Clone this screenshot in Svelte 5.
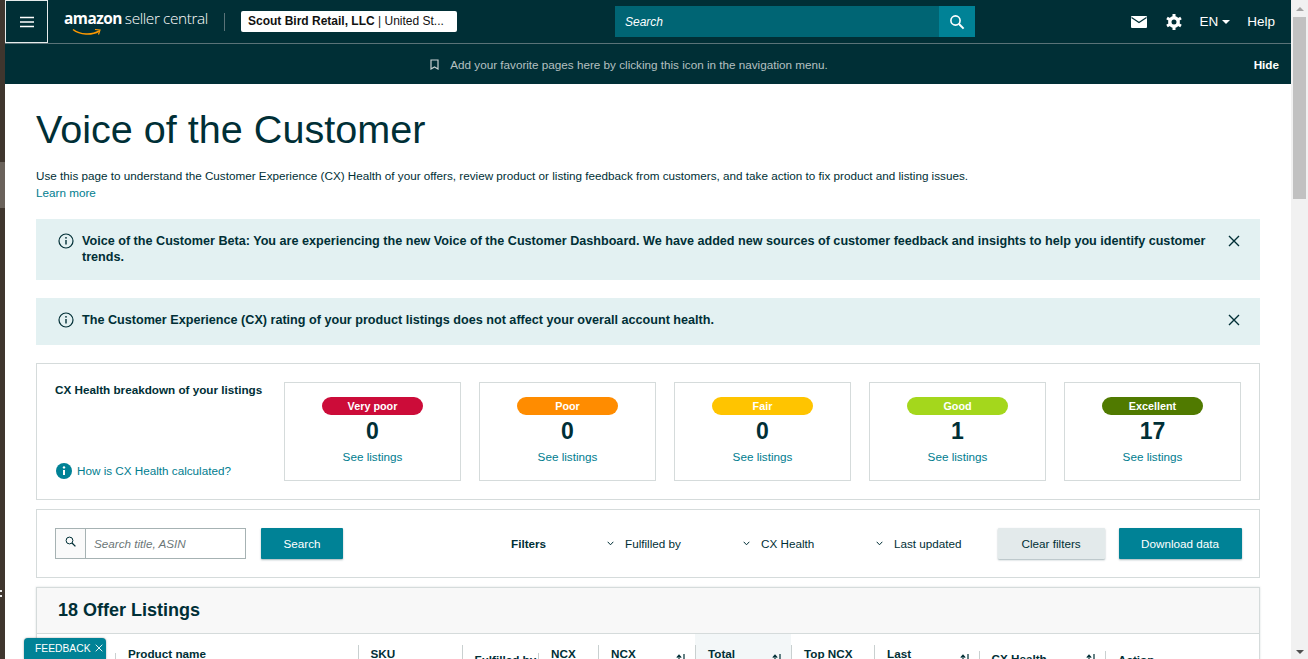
<script>
  const health = [
    { label: "Very poor", count: 0, cls: "vp" },
    { label: "Poor", count: 0, cls: "po" },
    { label: "Fair", count: 0, cls: "fa" },
    { label: "Good", count: 1, cls: "go" },
    { label: "Excellent", count: 17, cls: "ex" },
  ];
  const filters = [
    { label: "Fulfilled by", cls: "f1" },
    { label: "CX Health", cls: "f2" },
    { label: "Last updated", cls: "f3" },
  ];
  const notices = [
    "Voice of the Customer Beta: You are experiencing the new Voice of the Customer Dashboard. We have added new sources of customer feedback and insights to help you identify customer trends.",
    "The Customer Experience (CX) rating of your product listings does not affect your overall account health.",
  ];
  const columns = [
    { label: "", w: 78, cls: "" },
    { label: "Product name", w: 242.5, cls: "short" },
    { label: "SKU", w: 104, cls: "tall" },
    { label: "Fulfilled by", w: 76.5, cls: "tall low" },
    { label: "NCX", w: 60, cls: "short" },
    { label: "NCX", w: 97, cls: "tall", sort: true },
    { label: "Total", w: 96, cls: "tall active", sort: true },
    { label: "Top NCX", w: 83, cls: "tall" },
    { label: "Last", w: 104.5, cls: "tall", sort: true },
    { label: "CX Health", w: 126.5, cls: "mid low2", sort: true },
    { label: "Action", w: 153, cls: "mid low" },
  ];
</script>

<div class="window">
  <div class="strip">
    <span class="strip-thumb"></span>
    <span class="strip-mark"></span>
  </div>

  <div class="page">
    <header class="topbar">
      <button class="burger" aria-label="Menu">
        <svg width="16" height="12" viewBox="0 0 16 12"><path d="M1 1.5h14M1 6h14M1 10.5h14" stroke="#fff" stroke-width="1.4" /></svg>
      </button>
      <div class="logo">
        <span class="logo-main">amazon</span>
        <span class="logo-sub">seller central</span>
        <svg class="smile" width="30" height="9" viewBox="0 0 30 9"><path d="M1 1.5C8 7 20 7.5 27 3" fill="none" stroke="#f90" stroke-width="1.5" /><path d="M23 1.5l5 .5-1.5 4.5" fill="none" stroke="#f90" stroke-width="1.2" /></svg>
      </div>
      <span class="bar-divider"></span>
      <div class="account"><b>Scout Bird Retail, LLC</b> | United St...</div>
      <div class="topsearch">
        <span class="topsearch-input">Search</span>
        <span class="topsearch-btn">
          <svg width="16" height="16" viewBox="0 0 16 16"><circle cx="6.5" cy="6.5" r="4.6" fill="none" stroke="#fff" stroke-width="1.6" /><path d="M10 10l4.6 4.6" stroke="#fff" stroke-width="2" /></svg>
        </span>
      </div>
      <div class="topactions">
        <svg width="16" height="12" viewBox="0 0 16 12"><rect width="16" height="12" rx="1" fill="#fff" /><path d="M0.5 1.5L8 6.5l7.5-5" fill="none" stroke="#002f36" stroke-width="1.3" /></svg>
        <svg class="gear" width="16" height="16" viewBox="0 0 16 16"><circle cx="8" cy="8" r="4.2" fill="none" stroke="#fff" stroke-width="3.4" /><path d="M8 0v3M8 13v3M1 4l2.6 1.5M12.4 10.5L15 12M1 12l2.6-1.5M12.4 5.5L15 4" stroke="#fff" stroke-width="3" /></svg>
        <span class="lang">EN <i class="caret"></i></span>
        <span class="help">Help</span>
      </div>
    </header>

    <div class="favbar">
      <svg width="9" height="11" viewBox="0 0 9 11"><path d="M1 1h7v9L4.5 8 1 10z" fill="none" stroke="#c7d0d1" stroke-width="1.2" /></svg>
      <span>Add your favorite pages here by clicking this icon in the navigation menu.</span>
      <b class="hide">Hide</b>
    </div>

    <main class="content">
      <h1>Voice of the Customer</h1>
      <p class="intro">Use this page to understand the Customer Experience (CX) Health of your offers, review product or listing feedback from customers, and take action to fix product and listing issues.<br /><a href="#learn">Learn more</a></p>

      {#each notices as notice}
        <div class="notice">
          <svg class="notice-icon" width="16" height="16" viewBox="0 0 16 16"><circle cx="8" cy="8" r="7" fill="none" stroke="#002f36" stroke-width="1.2" /><path d="M8 7v4.5" stroke="#002f36" stroke-width="1.4" /><circle cx="8" cy="4.8" r=".9" fill="#002f36" /></svg>
          <p>{notice}</p>
          <svg class="notice-close" width="12" height="12" viewBox="0 0 12 12"><path d="M1 1l10 10M11 1L1 11" stroke="#002f36" stroke-width="1.4" /></svg>
        </div>
      {/each}

      <section class="card breakdown">
        <div class="breakdown-side">
          <b>CX Health breakdown of your listings</b>
          <a href="#how">
            <svg width="16" height="16" viewBox="0 0 16 16"><circle cx="8" cy="8" r="8" fill="#008296" /><path d="M8 7v5" stroke="#fff" stroke-width="2" /><circle cx="8" cy="4.4" r="1.2" fill="#fff" /></svg>
            How is CX Health calculated?
          </a>
        </div>
        {#each health as item}
          <div class="tile">
            <span class="pill {item.cls}">{item.label}</span>
            <strong>{item.count}</strong>
            <a href="#see">See listings</a>
          </div>
        {/each}
      </section>

      <section class="card toolbar">
        <div class="searchbox">
          <span class="searchbox-icon">
            <svg width="11" height="11" viewBox="0 0 11 11"><circle cx="4.5" cy="4.5" r="3.4" fill="none" stroke="#002f36" stroke-width="1" /><path d="M7 7l3.4 3.4" stroke="#002f36" stroke-width="1.3" /></svg>
          </span>
          <span class="searchbox-input">Search title, ASIN</span>
        </div>
        <button class="btn primary search-btn">Search</button>
        <b class="filters-label">Filters</b>
        {#each filters as filter}
          <span class="filter {filter.cls}">
            <svg width="7" height="5" viewBox="0 0 7 5"><path d="M.7.8l2.8 3 2.8-3" fill="none" stroke="#002f36" stroke-width="1" /></svg>
            {filter.label}
          </span>
        {/each}
        <button class="btn secondary">Clear filters</button>
        <button class="btn primary download">Download data</button>
      </section>

      <section class="listings">
        <h2>18 Offer Listings</h2>
        <div class="thead">
          {#each columns as col}
            <div class="th {col.cls}" style="width:{col.w}px">
              <b>{col.label}</b>
              {#if col.sort}
                <svg class="sort" width="11" height="12" viewBox="0 0 11 12"><path d="M3 12V1.5M.8 3.6L3 1.2l2.2 2.4M8 0v10.5M5.8 8.4L8 10.8l2.2-2.4" fill="none" stroke="#002f36" stroke-width="1.2" /></svg>
              {/if}
            </div>
          {/each}
        </div>
      </section>
    </main>

    <div class="feedback">
      FEEDBACK
      <svg width="8" height="8" viewBox="0 0 8 8"><path d="M.7.7l6.6 6.6M7.3.7L.7 7.3" stroke="#e3f1f2" stroke-width="1" /></svg>
    </div>
  </div>

  <div class="scrollbar">
    <i class="arrow up"></i>
    <span class="thumb"></span>
    <i class="arrow down"></i>
  </div>
</div>

<style>
  :global(body) {
    margin: 0;
    overflow: hidden;
  }

  .window {
    display: flex;
    height: 659px;
    overflow: hidden;
    font-family: "Liberation Sans", Arial, sans-serif;
    color: #002f36;
    font-size: 11.7px;
  }

  .strip {
    width: 5px;
    flex: none;
    background: #3f362e;
    padding-top: 162px;
    box-sizing: border-box;
  }

  .strip-thumb {
    display: block;
    height: 46px;
    background: #6a625b;
  }

  .strip-mark {
    display: block;
    width: 2px;
    height: 3px;
    margin-top: 382px;
    border-top: 2px solid #e8e8e8;
    border-bottom: 2px solid #e8e8e8;
  }

  .page {
    flex: 1;
    min-width: 0;
    position: relative;
    overflow: hidden;
    background: #fff;
  }

  .topbar {
    height: 43px;
    display: flex;
    align-items: center;
    background: #002f36;
    border-bottom: 1px solid #5a7378;
  }

  .burger {
    width: 43px;
    height: 43px;
    flex: none;
    background: none;
    border: 1px solid #e6ecec;
    padding: 0;
    display: flex;
    align-items: center;
    justify-content: center;
  }

  .logo {
    position: relative;
    margin-left: 16px;
    width: 145px;
    color: #fff;
    display: flex;
    align-items: baseline;
    gap: 3px;
    height: 26px;
    margin-top: -2px;
    white-space: nowrap;
  }

  .logo-main {
    font-family: "Open Sans", sans-serif;
    font-weight: 700;
    font-size: 15.4px;
    letter-spacing: -0.5px;
    line-height: 22px;
  }

  .logo-sub {
    font-family: "Open Sans", sans-serif;
    font-size: 15.4px;
    font-weight: 300;
    letter-spacing: -0.4px;
    line-height: 22px;
  }

  .smile {
    position: absolute;
    left: 8px;
    top: 20px;
  }

  .bar-divider {
    width: 1px;
    height: 18px;
    background: #5a7378;
    margin-left: 15px;
  }

  .account {
    margin-left: 16px;
    width: 216px;
    height: 21px;
    flex: none;
    box-sizing: border-box;
    background: #fff;
    border-radius: 2px;
    color: #111;
    font-size: 12px;
    line-height: 21px;
    padding-left: 7px;
    white-space: nowrap;
    overflow: hidden;
  }

  .account b {
    font-weight: 700;
  }

  .topsearch {
    margin-left: 158px;
    width: 360px;
    height: 31px;
    display: flex;
    flex: none;
  }

  .topsearch-input {
    flex: 1;
    background: #006574;
    color: #fff;
    font-size: 12px;
    font-style: italic;
    line-height: 32px;
    padding-left: 10px;
  }

  .topsearch-btn {
    width: 36px;
    background: #008296;
    display: flex;
    align-items: center;
    justify-content: center;
  }

  .topactions {
    margin-left: auto;
    padding-right: 16px;
    display: flex;
    align-items: center;
    color: #fff;
    font-size: 13.5px;
  }

  .gear {
    margin-left: 19px;
  }

  .lang {
    margin-left: 17px;
    display: inline-flex;
    align-items: center;
    gap: 4px;
  }

  .caret {
    width: 0;
    height: 0;
    border: 4px solid transparent;
    border-top-color: #fff;
    border-bottom: 0;
  }

  .help {
    margin-left: 17px;
  }

  .favbar {
    height: 40px;
    box-sizing: border-box;
    padding-right: 38px;
    background: #002f36;
    color: #b5c0c1;
    display: flex;
    align-items: center;
    justify-content: center;
    gap: 11px;
    position: relative;
  }

  .hide {
    position: absolute;
    right: 12px;
    color: #fff;
    font-weight: 700;
  }

  .content {
    padding: 0 31px;
  }

  h1 {
    margin: 0;
    padding-top: 22px;
    font-size: 39.6px;
    line-height: 46px;
    font-weight: 400;
    color: #002f36;
  }

  .intro {
    margin: 15px 0 18px;
    line-height: 17px;
  }

  a {
    color: #007d8f;
    text-decoration: none;
  }

  .notice {
    display: flex;
    align-items: flex-start;
    background: #e3f1f2;
    padding: 14px 20px 15px 22px;
    margin-bottom: 18px;
    min-height: 47px;
    box-sizing: border-box;
  }

  .notice-icon {
    flex: none;
    margin-right: 8px;
  }

  .notice p {
    margin: 0;
    flex: 1;
    font-size: 12.62px;
    font-weight: 700;
    line-height: 16px;
    padding-right: 14px;
  }

  .notice-close {
    flex: none;
    margin-top: 2px;
  }

  .card {
    border: 1px solid #d5dbdb;
    display: flex;
    background: #fff;
  }

  .breakdown {
    height: 137px;
    box-sizing: border-box;
    padding: 18px;
    gap: 18px;
  }

  .breakdown-side {
    width: 211px;
    flex: none;
    display: flex;
    flex-direction: column;
    justify-content: space-between;
    line-height: 16px;
  }

  .breakdown-side a {
    display: flex;
    align-items: center;
    gap: 5px;
    margin-left: 1px;
    margin-bottom: 2px;
  }

  .tile {
    flex: none;
    width: 177px;
    height: 99px;
    box-sizing: border-box;
    border: 1px solid #d5dbdb;
    display: flex;
    flex-direction: column;
    align-items: center;
    padding-top: 14px;
  }

  .pill {
    width: 101px;
    height: 18px;
    border-radius: 9px;
    color: #fff;
    font-size: 10.8px;
    font-weight: 700;
    line-height: 18px;
    text-align: center;
  }

  .vp { background: #cc0c39; }
  .po { background: #ff8c00; }
  .fa { background: #ffc400; }
  .go { background: #a4d71c; }
  .ex { background: #507a00; }

  .tile strong {
    font-size: 23px;
    line-height: 29px;
    margin-top: 2px;
  }

  .tile a {
    margin-top: 3px;
    line-height: 16px;
  }

  .toolbar {
    margin-top: 9px;
    height: 69px;
    box-sizing: border-box;
    align-items: center;
    padding: 0 18px;
  }

  .searchbox {
    width: 191px;
    height: 31px;
    box-sizing: border-box;
    border: 1px solid #a6b2b3;
    display: flex;
    flex: none;
  }

  .searchbox-icon {
    width: 30px;
    flex: none;
    border-right: 1px solid #a6b2b3;
    background: #fafafa;
    display: flex;
    align-items: center;
    justify-content: center;
    padding-bottom: 4px;
    box-sizing: border-box;
  }

  .searchbox-input {
    padding-left: 8px;
    font-style: italic;
    color: #6c7778;
    line-height: 29px;
  }

  .btn {
    height: 31px;
    box-sizing: border-box;
    border: 0;
    border-radius: 1px;
    font: inherit;
    flex: none;
    box-shadow: 0 1px 2px rgba(0, 47, 54, 0.35);
  }

  .primary {
    background: #008296;
    color: #fff;
  }

  .secondary {
    width: 107px;
    background: #e3eaeb;
    color: #002f36;
    margin-left: 36px;
  }

  .search-btn {
    width: 82px;
    margin-left: 15px;
  }

  .download {
    width: 123px;
    margin-left: 14px;
  }

  .filters-label {
    margin-left: 168px;
    width: 96px;
    flex: none;
  }

  .filter {
    display: inline-flex;
    align-items: center;
    gap: 11px;
    flex: none;
  }

  .f1 { width: 136px; }
  .f2 { width: 133px; }

  .listings {
    margin-top: 9px;
    border: 1px solid #d5dbdb;
    box-shadow: 0 0 2px rgba(0, 47, 54, 0.15);
  }

  h2 {
    margin: 0;
    height: 45px;
    background: #f8f8f8;
    border-bottom: 1px solid #d5dbdb;
    padding-left: 21px;
    font-size: 18px;
    line-height: 44px;
    font-weight: 700;
  }

  .thead {
    display: flex;
    height: 60px;
  }

  .th {
    position: relative;
    box-sizing: border-box;
    flex: none;
    padding: 12px 0 0 13px;
    line-height: 16px;
    white-space: nowrap;
  }

  .th.tall::before,
  .th.mid::before,
  .th.short::before {
    content: "";
    position: absolute;
    left: 0;
    bottom: 0;
    width: 1px;
    background: #c9d0d0;
  }

  .th.tall::before { top: 11px; }
  .th.mid::before { top: 17px; }
  .th.short::before { top: 19px; }

  .th.low {
    padding-top: 18px;
  }

  .th.low2 {
    padding-top: 17px;
  }

  .th.active {
    background: #f3f7f8;
  }

  .sort {
    position: absolute;
    right: 8px;
    top: 20px;
  }

  .feedback {
    position: absolute;
    left: 19px;
    bottom: 0;
    width: 82px;
    height: 21px;
    box-sizing: border-box;
    background: #008296;
    border-radius: 4px 4px 0 0;
    color: #fff;
    font-size: 10.3px;
    line-height: 21px;
    padding-left: 11px;
    box-shadow: 0 0 2px rgba(0, 0, 0, 0.4);
    white-space: nowrap;
  }

  .feedback svg {
    margin-left: 2px;
  }

  .scrollbar {
    width: 17px;
    flex: none;
    background: #f1f1f1;
    display: flex;
    flex-direction: column;
    align-items: center;
  }

  .thumb {
    width: 13px;
    height: 182px;
    margin-top: 6px;
    background: #c1c1c1;
  }

  .arrow {
    width: 0;
    height: 0;
    border: 4px solid transparent;
  }

  .arrow.up {
    margin-top: 7px;
    border-top: 0;
    border-bottom-color: #a3a3a3;
  }

  .arrow.down {
    margin-top: auto;
    margin-bottom: 5px;
    border-bottom: 0;
    border-top-color: #505050;
  }
</style>
